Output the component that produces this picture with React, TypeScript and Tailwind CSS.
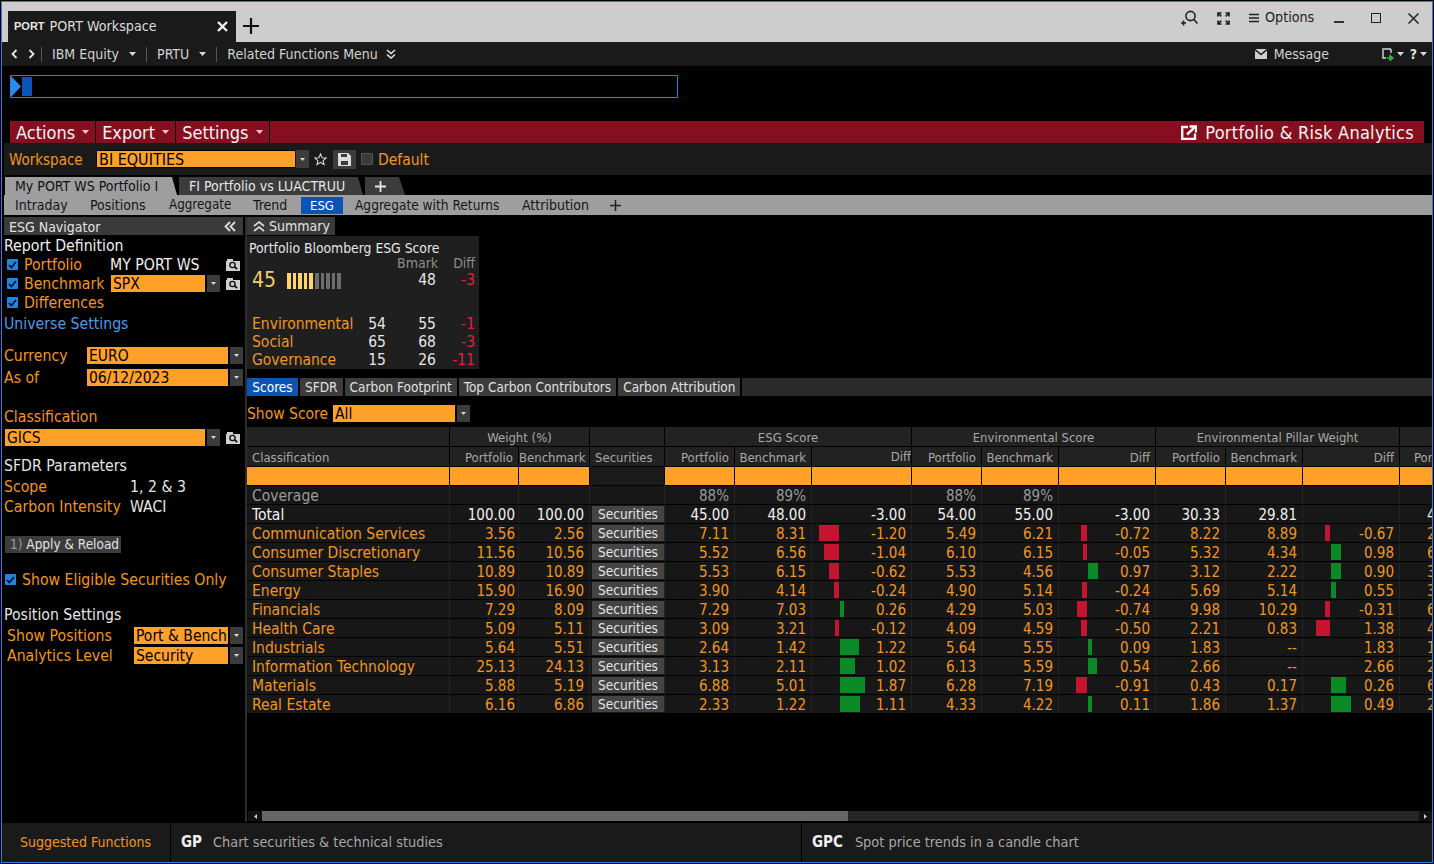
import React from "react";

const ORANGE_TEXT = "text-[#f0961f]";
const LABEL = "text-[#f0961f] pt-[2px]";

function Caret({ color = "#d8d8d8" }: { color?: string }) {
  return (
    <svg width="7" height="4" viewBox="0 0 7 4" className="shrink-0">
      <path d="M0 0h7L3.5 4z" fill={color} />
    </svg>
  );
}

function Field({ text, w }: { text: string; w: string }) {
  return (
    <div className="flex gap-[2px] h-[17px] items-stretch shrink-0">
      <div className={`${w} bg-[#ffa028] text-black text-[15.5px] leading-[19px] pl-[2px] overflow-hidden whitespace-nowrap`}>{text}</div>
      <div className="w-[13px] bg-[#3c3c3c] flex items-center justify-center">
        <svg width="5" height="3" viewBox="0 0 5 3"><path d="M0 0h5L2.5 3z" fill="#d8d8d8" /></svg>
      </div>
    </div>
  );
}

function SearchBox() {
  return (
    <svg width="14" height="12" viewBox="0 0 14 12" className="shrink-0">
      <path d="M0 2h1V0h6v2h7v10H0z" fill="#cfcfcf" />
      <circle cx="6.500" cy="6" r="2.600" fill="none" stroke="#111" strokeWidth="1.400" />
      <path d="M8.500 8l2.800 2" stroke="#111" strokeWidth="1.600" />
    </svg>
  );
}

function Check() {
  return (
    <div className="w-[11px] h-[11px] bg-[#1f86e0] flex items-center justify-center shrink-0 rounded-[1px]">
      <svg width="9" height="8" viewBox="0 0 9 8" fill="none" stroke="#0b0b2a" strokeWidth="1.800">
        <path d="M1 4l2.400 2.500L8 1" />
      </svg>
    </div>
  );
}

function TitleBar() {
  return (
    <div className="h-[40px] bg-[#cdcdcd] flex shrink-0 items-end pl-[6px]">
      <div className="w-[228px] h-[31px] bg-[#1a1a1a] flex items-center pl-[6px] pr-[8px] text-[#dcdcdc] text-[14.200px] whitespace-nowrap">
        <span className="font-['Liberation_Sans'] font-bold text-[11px] mr-[5px] text-[#e8e8e8]">PORT</span>
        <span>PORT Workspace</span>
        <svg width="11" height="11" viewBox="0 0 11 11" className="ml-auto" stroke="#f2f2f2" strokeWidth="2.400" fill="none">
          <path d="M1 1l9 9M10 1l-9 9" />
        </svg>
      </div>
      <div className="self-center mt-[8px] ml-[7px]">
        <svg width="16" height="16" viewBox="0 0 16 16" stroke="#111" strokeWidth="2.200" fill="none"><path d="M8 0v16M0 8h16" /></svg>
      </div>
      <div className="ml-auto self-stretch flex items-center text-[14.200px] text-[#222] pr-[13px] pb-[8px]">
        <svg width="18" height="17" viewBox="0 0 18 17" fill="none" stroke="#222" strokeWidth="1.600">
          <circle cx="10.500" cy="6" r="4.600" />
          <path d="M14 9.500l3.400 4M1 13h5M3.500 10.500v5" />
        </svg>
        <svg className="ml-[19px]" width="13" height="13" viewBox="0 0 13 13" fill="none" stroke="#222" strokeWidth="1.700">
          <path d="M1 4.500V1h3.500M8.500 1H12v3.500M12 8.500V12H8.500M4.500 12H1V8.500M1.500 1.500l2.800 2.800M11.500 1.500l-2.800 2.800M11.500 11.500l-2.800-2.800M1.500 11.500l2.800-2.800" />
        </svg>
        <svg className="ml-[19px]" width="10" height="10" viewBox="0 0 10 10" stroke="#222" strokeWidth="1.300"><path d="M0 1.500h10M0 5h10M0 8.500h10" /></svg>
        <span className="ml-[6px] w-[49px] whitespace-nowrap">Options</span>
        <div className="ml-[20px] w-[10px] h-[2px] bg-[#333] mt-[7px]" />
        <div className="ml-[27px] w-[10px] h-[10px] border-[1.500px] border-[#222]" />
        <svg className="ml-[27px]" width="11" height="11" viewBox="0 0 11 11" stroke="#222" strokeWidth="1.500" fill="none"><path d="M0.500 0.500l10 10M10.500 0.500l-10 10" /></svg>
      </div>
    </div>
  );
}

function Sep() {
  return <div className="w-px h-[15px] bg-[#555]" />;
}

function NavBar() {
  return (
    <div className="h-[24px] bg-[#1a1a1a] flex items-center shrink-0 text-[#d2d2d2] text-[14px] whitespace-nowrap pl-[9px] pr-[5px]">
      <svg width="7" height="10" viewBox="0 0 7 10" fill="none" stroke="#e6e6e6" strokeWidth="1.800"><path d="M5.500 1L1.500 5l4 4" /></svg>
      <svg className="ml-[10px]" width="7" height="10" viewBox="0 0 7 10" fill="none" stroke="#e6e6e6" strokeWidth="1.800"><path d="M1.500 1l4 4-4 4" /></svg>
      <div className="ml-[6px] mr-[10px]"><Sep /></div>
      <span>IBM Equity</span>
      <div className="ml-[10px] mr-[10px]"><Caret /></div>
      <Sep />
      <span className="ml-[10px]">PRTU</span>
      <div className="ml-[10px] mr-[10px]"><Caret /></div>
      <Sep />
      <span className="ml-[10px]">Related Functions Menu</span>
      <svg className="ml-[8px]" width="10" height="10" viewBox="0 0 10 10" fill="none" stroke="#e0e0e0" strokeWidth="1.600"><path d="M1 1l4 3.500L9 1M1 5.500L5 9l4-3.500" /></svg>
      <svg className="ml-auto" width="12" height="10" viewBox="0 0 12 10"><path d="M0 0h12v10H0z" fill="#cfcfcf" /><path d="M0 0.500l6 5 6-5" fill="none" stroke="#1a1a1a" strokeWidth="1.400" /></svg>
      <span className="ml-[7px] w-[58px]">Message</span>
      <svg className="ml-[50px]" width="13" height="13" viewBox="0 0 13 13" fill="none">
        <path d="M9 1H1v9h3M9 1v4" stroke="#d8d8d8" strokeWidth="1.400" />
        <path d="M5 10h5M8 7.500l3 2.500-3 2.500z" stroke="#2fb83c" strokeWidth="1.400" fill="#2fb83c" />
      </svg>
      <div className="ml-[2px]"><Caret /></div>
      <span className="ml-[6px] text-[14px] font-bold text-[#e0e0e0]">?</span>
      <div className="ml-[3px]"><Caret /></div>
    </div>
  );
}

function Command() {
  return (
    <div className="h-[55px] shrink-0 pt-[9px] pl-[8px]">
      <div className="w-[668px] h-[23px] border border-[#2f7ecb] flex items-center">
        <svg width="10" height="21" viewBox="0 0 10 21" className="shrink-0"><path d="M0 0l10 10.500L0 21z" fill="#2a8cf0" /></svg>
        <div className="w-[10px] h-[19px] bg-[#0b55b8] ml-px" />
      </div>
    </div>
  );
}

function MenuBtn({ label }: { label: string }) {
  return (
    <div className="h-[22px] flex items-center gap-[7px] px-[6px] bg-[#860f1f] border-r border-black text-[18px] text-[#f4f4f4]">
      <span className="pt-[2px]">{label}</span>
      <Caret color="#e8c8c8" />
    </div>
  );
}

function RedBar() {
  return (
    <div className="h-[22px] shrink-0 ml-[8px] mr-[8px] bg-[#860f1f] flex items-center pr-[10px] leading-[22px] whitespace-nowrap">
      <MenuBtn label="Actions" />
      <MenuBtn label="Export" />
      <MenuBtn label="Settings" />
      <svg className="ml-auto" width="16" height="15" viewBox="0 0 16 15" fill="none" stroke="#f4f4f4" strokeWidth="2.400"><path d="M7 2H1.200v12H14V8.500" /><path d="M6 9.500L14 2M8.500 1.500H15V7.500" /></svg>
      <span className="ml-[8px] pt-[2px] text-[18px] tracking-[0.27px] text-[#f4f4f4]">Portfolio &amp; Risk Analytics</span>
    </div>
  );
}

function WorkspaceBar() {
  return (
    <div className="h-[32px] shrink-0 ml-[2px] bg-[#1a1a1a] flex items-center pl-[5px] text-[15.500px] whitespace-nowrap">
      <span className={`w-[87px] text-[15px] pt-[2px] ${ORANGE_TEXT}`}>Workspace</span>
      <div className="w-[199px] h-[18px] bg-[#ffa028] border-l border-t border-b border-black text-black leading-[17px] pl-[2px] text-[16px]">BI EQUITIES</div>
      <div className="w-[13px] h-[18px] ml-px bg-[#3c3c3c] flex items-center justify-center">
        <svg width="5" height="3" viewBox="0 0 5 3"><path d="M0 0h5L2.500 3z" fill="#d8d8d8" /></svg>
      </div>
      <svg className="ml-[5px]" width="13" height="13" viewBox="0 0 13 13" fill="none" stroke="#d8d8d8" strokeWidth="1.100"><path d="M6.500 1l1.600 3.700 4 .3-3 2.600.9 3.900-3.500-2.100L3 11.500l.9-3.900-3-2.600 4-.3z" /></svg>
      <div className="ml-[6px] w-[23px] h-[19px] bg-[#3c3c3c] flex items-center justify-center">
        <svg width="13" height="13" viewBox="0 0 13 13"><path d="M0 0h10l3 3v10H0z" fill="#dcdcdc" /><path d="M3 1h6v3H3zM3 8h7v4H3z" fill="#3c3c3c" /></svg>
      </div>
      <div className="ml-[5px] w-[12px] h-[12px] bg-[#3a3a3a] border border-[#555] rounded-[1px]" />
      <span className={`ml-[5px] pt-[3px] ${ORANGE_TEXT}`}>Default</span>
    </div>
  );
}

function Tabs() {
  return (
    <div className="shrink-0 flex h-[18px] mt-[2px] ml-[3px] text-[14px] leading-[18px] whitespace-nowrap">
      <div className="w-[172px] bg-[#9e9e9e] text-[#111] pl-[10px] [clip-path:polygon(0_0,167px_0,100%_100%,0_100%)]">My PORT WS Portfolio I</div>
      <div className="w-[184px] ml-[2px] bg-[#3c3c3c] text-[#e6e6e6] pl-[10px] [clip-path:polygon(0_0,179px_0,100%_100%,0_100%)]">FI Portfolio vs LUACTRUU</div>
      <div className="w-[40px] ml-[2px] bg-[#3c3c3c] flex pl-[10px] items-center [clip-path:polygon(0_0,34px_0,100%_100%,0_100%)]">
        <svg width="11" height="11" viewBox="0 0 11 11" stroke="#e6e6e6" strokeWidth="1.800"><path d="M5.500 0v11M0 5.500h11" /></svg>
      </div>
    </div>
  );
}

function SubTabs() {
  return (
    <div className="h-[20px] shrink-0 ml-[2px] bg-[#9e9e9e] flex items-center text-[14px] pl-[11px] text-[#151515] whitespace-nowrap">
      <div className="w-[75px]">Intraday</div>
      <div className="w-[79px]">Positions</div>
      <div className="w-[84px] text-[13.300px]">Aggregate</div>
      <div className="w-[48px]">Trend</div>
      <div className="w-[42px] h-[17px] leading-[17px] text-center text-[13px] bg-[#0b55b0] text-white">ESG</div>
      <div className="w-[167px] ml-[12px] text-[13.600px]">Aggregate with Returns</div>
      <div className="w-[88px]">Attribution</div>
      <svg width="11" height="11" viewBox="0 0 11 11" stroke="#222" strokeWidth="1.500"><path d="M5.500 0v11M0 5.500h11" /></svg>
    </div>
  );
}

function Navigator() {
  return (
    <div className="w-[239px] shrink-0 flex flex-col text-[15.700px] leading-[19px] whitespace-nowrap">
      <div className="h-[18px] bg-[#3a3a3a] flex items-center justify-between pl-[5px] pr-[7px] text-[14px] text-[#e2e2e2]">
        <span className="pt-[2px]">ESG Navigator</span>
        <svg width="12" height="11" viewBox="0 0 12 11" fill="none" stroke="#dcdcdc" strokeWidth="1.800">
          <path d="M6 1L1.500 5.500 6 10M11 1L6.500 5.500 11 10" />
        </svg>
      </div>
      <div className="h-[19px] mt-px text-[#f0f0f0]">Report Definition</div>
      <div className="h-[19px] flex items-center pl-[3px]">
        <Check />
        <span className={`ml-[6px] w-[86px] ${ORANGE_TEXT}`}>Portfolio</span>
        <span className="text-[#f0f0f0] w-[116px]">MY PORT WS</span>
        <SearchBox />
      </div>
      <div className="h-[19px] flex items-center pl-[3px]">
        <Check />
        <span className={`ml-[6px] w-[87px] ${ORANGE_TEXT}`}>Benchmark</span>
        <Field text="SPX" w="w-[94px]" />
        <div className="ml-[6px]"><SearchBox /></div>
      </div>
      <div className="h-[19px] flex items-center pl-[3px]">
        <Check />
        <span className={`ml-[6px] ${ORANGE_TEXT}`}>Differences</span>
      </div>
      <div className="h-[19px] mt-[2px] text-[#4c9be8]">Universe Settings</div>
      <div className="h-[19px] mt-[13px] flex items-center">
        <span className={`w-[83px] ${ORANGE_TEXT}`}>Currency</span>
        <Field text="EURO" w="w-[141px]" />
      </div>
      <div className="h-[19px] mt-[3px] flex items-center">
        <span className={`w-[83px] ${ORANGE_TEXT}`}>As of</span>
        <Field text="06/12/2023" w="w-[141px]" />
      </div>
      <div className={`h-[19px] mt-[20px] ${ORANGE_TEXT}`}>Classification</div>
      <div className="h-[19px] mt-[2px] flex items-center pl-px">
        <Field text="GICS" w="w-[200px]" />
        <div className="ml-[6px]"><SearchBox /></div>
      </div>
      <div className="h-[19px] mt-[9px] text-[#e6e6e6]">SFDR Parameters</div>
      <div className="h-[19px] mt-[2px] flex">
        <span className={`w-[126px] ${ORANGE_TEXT}`}>Scope</span>
        <span className="text-[#e6e6e6]">1, 2 &amp; 3</span>
      </div>
      <div className="h-[19px] mt-px flex">
        <span className={`w-[126px] ${ORANGE_TEXT}`}>Carbon Intensity</span>
        <span className="text-[#e6e6e6]">WACI</span>
      </div>
      <div className="mt-[20px] ml-px w-[116px] h-[17px] bg-[#3c3c3c] text-[13.500px] leading-[17px] text-[#e2e2e2] pl-[5px]">
        <span className="text-[#9a9a9a]">1)</span> Apply &amp; Reload
      </div>
      <div className="h-[19px] mt-[17px] flex items-center pl-px">
        <Check />
        <span className={`ml-[6px] ${ORANGE_TEXT}`}>Show Eligible Securities Only</span>
      </div>
      <div className="h-[19px] mt-[16px] text-[#e6e6e6]">Position Settings</div>
      <div className="h-[19px] mt-[2px] flex items-center pl-[3px]">
        <span className={`w-[127px] ${ORANGE_TEXT}`}>Show Positions</span>
        <Field text="Port & Bench" w="w-[94px]" />
      </div>
      <div className="h-[19px] mt-px flex items-center pl-[3px]">
        <span className={`w-[127px] ${ORANGE_TEXT}`}>Analytics Level</span>
        <Field text="Security" w="w-[94px]" />
      </div>
    </div>
  );
}

function SummaryRow({ label, a, b, c }: { label: string; a: string; b: string; c: string }) {
  return (
    <div className="grid grid-cols-[5px_100px_34px_50px_39px] h-[18px] leading-[18px] text-[15.500px] text-[#e6e6e6]">
      <span />
      <span className={ORANGE_TEXT}>{label}</span>
      <span className="text-right">{a}</span>
      <span className="text-right">{b}</span>
      <span className="text-right text-[#e3203f]">{c}</span>
    </div>
  );
}

function Summary() {
  const ticks = [1, 1, 1, 1, 1, 0, 0, 0, 0, 0];
  return (
    <div className="flex flex-col">
      <div className="w-[88px] h-[18px] bg-[#3a3a3a] flex items-center pl-[6px] gap-[4px] text-[14px] text-[#e2e2e2]">
        <svg width="12" height="11" viewBox="0 0 12 11" fill="none" stroke="#dcdcdc" strokeWidth="1.700"><path d="M1 5l5-4 5 4M1 10l5-4 5 4" /></svg>
        <span>Summary</span>
      </div>
      <div className="w-[232px] h-[133px] mt-px bg-[#1f1f1f] flex flex-col whitespace-nowrap">
        <div className="h-[20px] pl-[2px] pt-[3px] text-[13.800px] leading-[18px] text-[#e6e6e6]">Portfolio Bloomberg ESG Score</div>
        <div className="h-[15px] flex text-[14px] leading-[15px] text-[#8c8c8c] justify-end pr-[4px]">
          <span className="mr-[15px]">Bmark</span>
          <span>Diff</span>
        </div>
        <div className="h-[19px] flex items-center text-[15.500px] text-[#e6e6e6]">
          <span className="pl-[5px] w-[40px] text-[21px] leading-[19px] text-[#f3cd6c]">45</span>
          <div className="flex gap-[2px] h-[16px]">
            {ticks.map((on, i) => (
              <div key={i} className={on ? "w-[3.600px] bg-[#ffd468]" : "w-[3.600px] bg-[#6c6c6c]"} />
            ))}
          </div>
          <span className="ml-auto mr-[15px]">48</span>
          <span className="w-[24px] mr-[4px] text-right text-[#e3203f]">-3</span>
        </div>
        <div className="h-[26px]" />
        <SummaryRow label="Environmental" a="54" b="55" c="-1" />
        <SummaryRow label="Social" a="65" b="68" c="-3" />
        <SummaryRow label="Governance" a="15" b="26" c="-11" />
      </div>
    </div>
  );
}

const SCORE_TABS = ["SFDR", "Carbon Footprint", "Top Carbon Contributors", "Carbon Attribution"];

function ScoreTabs() {
  return (
    <div className="h-[18px] mt-[9px] flex gap-[2px] text-[13.500px] leading-[18px] text-[#e0e0e0] whitespace-nowrap">
      <div className="w-[51px] text-center bg-[#0b55b0] text-white">Scores</div>
      {SCORE_TABS.map((t) => (
        <div key={t} className="px-[5px] bg-[#3c3c3c]">{t}</div>
      ))}
      <div className="flex-1 bg-[#2a2a2a]" />
    </div>
  );
}

const COLS = "grid-cols-[203px_69px_71px_75px_70px_77px_100px_70px_77px_97px_70px_77px_97px_32px]";
const CELL = "border-r border-black overflow-hidden whitespace-nowrap";
const BCELL = "border-r border-[#242424] overflow-hidden whitespace-nowrap";

type Row = {
  n: string; w1: string; w2: string;
  e1: string; e2: string; ed: string; eb: number;
  v1: string; v2: string; vd: string; vb: number;
  p1: string; p2: string; pd: string; pb: number;
  x: string;
};

const ROWS: Row[] = [
  { n: "Communication Services", w1: "3.56", w2: "2.56", e1: "7.11", e2: "8.31", ed: "-1.20", eb: -20, v1: "5.49", v2: "6.21", vd: "-0.72", vb: -6, p1: "8.22", p2: "8.89", pd: "-0.67", pb: -5, x: "2" },
  { n: "Consumer Discretionary", w1: "11.56", w2: "10.56", e1: "5.52", e2: "6.56", ed: "-1.04", eb: -15, v1: "6.10", v2: "6.15", vd: "-0.05", vb: -4, p1: "5.32", p2: "4.34", pd: "0.98", pb: 10, x: "6" },
  { n: "Consumer Staples", w1: "10.89", w2: "10.89", e1: "5.53", e2: "6.15", ed: "-0.62", eb: -10, v1: "5.53", v2: "4.56", vd: "0.97", vb: 10, p1: "3.12", p2: "2.22", pd: "0.90", pb: 10, x: "3" },
  { n: "Energy", w1: "15.90", w2: "16.90", e1: "3.90", e2: "4.14", ed: "-0.24", eb: -5, v1: "4.90", v2: "5.14", vd: "-0.24", vb: -5, p1: "5.69", p2: "5.14", pd: "0.55", pb: 5, x: "3" },
  { n: "Financials", w1: "7.29", w2: "8.09", e1: "7.29", e2: "7.03", ed: "0.26", eb: 4, v1: "4.29", v2: "5.03", vd: "-0.74", vb: -10, p1: "9.98", p2: "10.29", pd: "-0.31", pb: -5, x: "6" },
  { n: "Health Care", w1: "5.09", w2: "5.11", e1: "3.09", e2: "3.21", ed: "-0.12", eb: -4, v1: "4.09", v2: "4.59", vd: "-0.50", vb: -6, p1: "2.21", p2: "0.83", pd: "1.38", pb: -14, x: "4" },
  { n: "Industrials", w1: "5.64", w2: "5.51", e1: "2.64", e2: "1.42", ed: "1.22", eb: 19, v1: "5.64", v2: "5.55", vd: "0.09", vb: 4, p1: "1.83", p2: "--", pd: "1.83", pb: 0, x: "1" },
  { n: "Information Technology", w1: "25.13", w2: "24.13", e1: "3.13", e2: "2.11", ed: "1.02", eb: 15, v1: "6.13", v2: "5.59", vd: "0.54", vb: 9, p1: "2.66", p2: "--", pd: "2.66", pb: 0, x: "2" },
  { n: "Materials", w1: "5.88", w2: "5.19", e1: "6.88", e2: "5.01", ed: "1.87", eb: 25, v1: "6.28", v2: "7.19", vd: "-0.91", vb: -11, p1: "0.43", p2: "0.17", pd: "0.26", pb: 15, x: "6" },
  { n: "Real Estate", w1: "6.16", w2: "6.86", e1: "2.33", e2: "1.22", ed: "1.11", eb: 20, v1: "4.33", v2: "4.22", vd: "0.11", vb: 4, p1: "1.86", p2: "1.37", pd: "0.49", pb: 20, x: "2" },
];

function Num({ v }: { v: string }) {
  return <div className={`${BCELL} text-right pr-[5px] text-[15px]`}>{v}</div>;
}

function NumW({ v }: { v: string }) {
  return <div className={`${BCELL} text-right pr-[3px] text-[15px]`}>{v}</div>;
}

function DiffCell({ v, bar, red, green }: { v: string; bar: number; red: string; green: string }) {
  return (
    <div className={`${BCELL} flex py-[1px] pr-[5px]`}>
      <div className={`${red} flex justify-end shrink-0`}>
        {bar < 0 && <div className="bg-[#c4142f] h-full" style={{ width: -bar }} />}
      </div>
      <div className={`${green} ml-px shrink-0`}>
        {bar > 0 && <div className="bg-[#0a8a26] h-full" style={{ width: bar }} />}
      </div>
      <div className="flex-1 text-right leading-[18px] text-[15px]">{v}</div>
    </div>
  );
}

function SecBtn() {
  return (
    <div className={`${BCELL} pl-[2px] py-px`}>
      <div className="h-[16px] bg-[#444] text-[#e4e4e4] text-[13.500px] leading-[17px] text-center">Securities</div>
    </div>
  );
}

function HeadCell({ t, right = true }: { t: string; right?: boolean }) {
  return <div className={`${CELL} ${right ? "text-right pr-[5px]" : "pl-[5px]"}`}>{t}</div>;
}

function Table() {
  return (
    <div className="flex flex-col w-[1185px] mt-[4px] overflow-hidden">
      <div className={`grid ${COLS} h-[20px] bg-[#222] border-b border-black text-[13px] leading-[21px] text-[#a8a8a8] text-center`}>
        <div className={CELL} />
        <div className={`${CELL} col-span-2`}>Weight (%)</div>
        <div className={CELL} />
        <div className={`${CELL} col-span-3`}>ESG Score</div>
        <div className={`${CELL} col-span-3`}>Environmental Score</div>
        <div className={`${CELL} col-span-3`}>Environmental Pillar Weight</div>
        <div />
      </div>
      <div className={`grid ${COLS} h-[20px] bg-[#222] border-b border-black text-[13px] leading-[21px] text-[#a8a8a8]`}>
        <HeadCell t="Classification" right={false} />
        <HeadCell t="Portfolio" />
        <HeadCell t="Benchmark" />
        <HeadCell t="Securities" right={false} />
        <HeadCell t="Portfolio" />
        <HeadCell t="Benchmark" />
        <div className={`${CELL} text-right leading-[19px]`}>Diff</div>
        <HeadCell t="Portfolio" />
        <HeadCell t="Benchmark" />
        <HeadCell t="Diff" />
        <HeadCell t="Portfolio" />
        <HeadCell t="Benchmark" />
        <HeadCell t="Diff" />
        <div className="overflow-hidden whitespace-nowrap pl-[14px]">Portfolio</div>
      </div>
      <div className={`grid ${COLS} h-[19px] bg-[#ffa028] border-b border-black`}>
        {Array.from({ length: 13 }).map((_, i) => (
          <div key={i} className={i === 3 ? "bg-[#1a1a1a] border-r border-black" : "border-r border-black"} />
        ))}
      </div>
      <div className={`grid ${COLS} h-[19px] bg-[#171717] border-b border-black text-[15px] leading-[20px] text-[#9a9a9a]`}>
        <div className={`${BCELL} pl-[5px] text-[15.500px]`}>Coverage</div>
        <div className={BCELL} /><div className={BCELL} /><div className={BCELL} />
        <Num v="88%" /><Num v="89%" /><div className={BCELL} />
        <Num v="88%" /><Num v="89%" /><div className={BCELL} />
        <div className={BCELL} /><div className={BCELL} /><div className={BCELL} /><div />
      </div>
      <div className={`grid ${COLS} h-[19px] bg-[#171717] border-b border-black text-[15.500px] leading-[20px] text-[#f0f0f0]`}>
        <div className={`${BCELL} pl-[5px]`}>Total</div>
        <NumW v="100.00" /><Num v="100.00" /><SecBtn />
        <Num v="45.00" /><Num v="48.00" /><Num v="-3.00" />
        <Num v="54.00" /><Num v="55.00" /><Num v="-3.00" />
        <Num v="30.33" /><Num v="29.81" /><div className={BCELL} />
        <div className="overflow-hidden pl-[27px]">4</div>
      </div>
      {ROWS.map((r) => (
        <div key={r.n} className={`grid ${COLS} h-[19px] bg-[#171717] border-b border-black text-[15.500px] leading-[20px] ${ORANGE_TEXT}`}>
          <div className={`${BCELL} pl-[5px]`}>{r.n}</div>
          <NumW v={r.w1} /><Num v={r.w2} /><SecBtn />
          <Num v={r.e1} /><Num v={r.e2} />
          <DiffCell v={r.ed} bar={r.eb} red="w-[27px]" green="w-[26px]" />
          <Num v={r.v1} /><Num v={r.v2} />
          <DiffCell v={r.vd} bar={r.vb} red="w-[28px]" green="w-[11px]" />
          <Num v={r.p1} /><Num v={r.p2} />
          <DiffCell v={r.pd} bar={r.pb} red="w-[27px]" green="w-[20px]" />
          <div className="overflow-hidden pl-[27px]">{r.x}</div>
        </div>
      ))}
    </div>
  );
}

function ScrollBar() {
  return (
    <div className="mt-auto h-[10px] flex bg-[#262626] mb-px ml-px">
      <div className="w-[14px] bg-[#111] flex items-center justify-center">
        <svg width="3" height="5" viewBox="0 0 3 5"><path d="M3 0v5L0 2.500z" fill="#ccc" /></svg>
      </div>
      <div className="w-[586px] bg-[#666]" />
      <div className="ml-auto w-[13px] bg-[#111] flex items-center justify-center">
        <svg width="3" height="5" viewBox="0 0 3 5"><path d="M0 0v5l3-2.500z" fill="#ccc" /></svg>
      </div>
    </div>
  );
}

function Right() {
  return (
    <div className="flex-1 min-w-0 flex flex-col">
      <Summary />
      <ScoreTabs />
      <div className="h-[19px] mt-[8px] flex items-center text-[15.500px] whitespace-nowrap">
        <span className={`w-[86px] ${LABEL}`}>Show Score</span>
        <Field text="All" w="w-[122px]" />
      </div>
      <Table />
      <ScrollBar />
    </div>
  );
}

function Footer() {
  return (
    <div className="h-[40px] shrink-0 bg-[#1a1a1a] border-t border-black flex items-center text-[14.400px] text-[#a8a8a8] whitespace-nowrap">
      <div className={`w-[169px] h-full border-r border-black flex items-center pl-[18px] text-[14px] ${ORANGE_TEXT}`}>Suggested Functions</div>
      <div className="w-[631px] h-full border-r border-black flex items-center pl-[10px]">
        <span className="font-bold text-[15px] text-[#f0f0f0] mr-[11px]">GP</span>Chart securities &amp; technical studies
      </div>
      <div className="flex-1 h-full flex items-center pl-[10px]">
        <span className="font-bold text-[15px] text-[#f0f0f0] mr-[12px]">GPC</span>Spot price trends in a candle chart
      </div>
    </div>
  );
}

export default function App() {
  return (
    <div className="w-[1434px] h-[864px] bg-black p-px overflow-hidden font-['DejaVu_Sans_Condensed','DejaVu_Sans',sans-serif]">
      <div className="w-full h-full border border-[#2a80d8] flex flex-col text-white overflow-hidden">
        <TitleBar />
        <NavBar />
        <Command />
        <RedBar />
        <WorkspaceBar />
        <Tabs />
        <SubTabs />
        <div className="flex-1 min-h-0 flex mt-[2px] ml-[2px]">
          <Navigator />
          <div className="w-[2px] ml-[2px] bg-[#2c2c2c]" />
          <Right />
        </div>
        <Footer />
      </div>
    </div>
  );
}
